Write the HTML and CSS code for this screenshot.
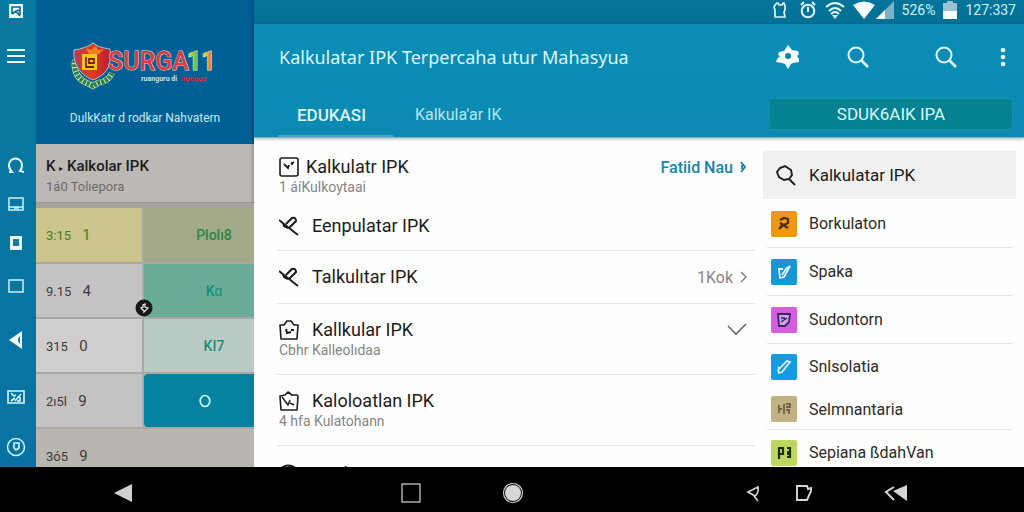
FILE: index.html
```html
<!DOCTYPE html>
<html lang="id">
<head>
<meta charset="utf-8">
<meta name="viewport" content="width=device-width, initial-scale=1">
<title>Kalkulatar IPK</title>
<link rel="stylesheet" href="styles.css">
</head>
<body>
<div class="screen">
  <div class="app">
    <nav class="rail" aria-label="Menu">
      <button class="rail-btn" aria-label="App"><svg width="16" height="16" viewBox="0 0 16 16"><rect x="1" y="1" width="14" height="14" fill="#eaf8fb"/><path d="M4 11V4h8v8M4 11l4-3 4 5M9 7l3 1" fill="none" stroke="#0b6a92" stroke-width="1.6"/></svg></button>
      <button class="rail-btn" aria-label="Buka menu"><svg width="20" height="16" viewBox="0 0 20 16"><path d="M1 2h18M1 8h18M1 14h18" stroke="#e4fbff" stroke-width="2"/></svg></button>
      <span class="rail-gap"></span>
      <button class="rail-btn" aria-label="Dukungan"><svg width="18" height="18" viewBox="0 0 18 18"><path d="M2 16h3c-2-2-3-4-3-7a6.500 6.500 0 0 1 13 0c0 3-1 5-2 6l4 1" fill="none" stroke="#e4fbff" stroke-width="2"/></svg></button>
      <button class="rail-btn" aria-label="Layar"><svg width="16" height="14" viewBox="0 0 16 14"><path d="M1 1h14v12H1zM1 10h14M6 11h5" fill="none" stroke="#c9f3fa" stroke-width="1.500"/></svg></button>
      <button class="rail-btn" aria-label="Catatan"><svg width="14" height="16" viewBox="0 0 14 16"><rect x="1" y="1" width="12" height="14" fill="#e4fbff"/><rect x="4" y="4" width="6" height="7" fill="#2a84a8"/><path d="M4 6h6M4 9h6" stroke="#0b5f88"/></svg></button>
      <button class="rail-btn" aria-label="Kotak"><svg width="16" height="14" viewBox="0 0 16 14"><rect x="1" y="1" width="14" height="12" fill="none" stroke="#c9f3fa" stroke-width="1.500"/></svg></button>
      <button class="rail-btn" aria-label="Kembali"><svg width="14" height="20" viewBox="0 0 14 20"><path d="M13 1v18L0 10z" fill="#eefcff"/><path d="M11 6v8q-4-4 0-8" fill="#0b709d"/></svg></button>
      <button class="rail-btn" aria-label="Gambar"><svg width="18" height="16" viewBox="0 0 18 16"><path d="M1 2h16v12H1zM4 4l3 3 2-1M8 12l6-7M4 12l4-3M13 8v4h-3" fill="none" stroke="#d5f6fc" stroke-width="1.600"/></svg></button>
      <button class="rail-btn" aria-label="Profil"><svg width="20" height="20" viewBox="0 0 20 20"><circle cx="10" cy="10" r="8.500" fill="none" stroke="#d5f6fc" stroke-width="1.500"/><path d="M8 6h5v5l-3 2-2-2z" fill="none" stroke="#d5f6fc" stroke-width="1.600"/></svg></button>
    </nav>

    <aside class="drawer">
      <header class="brand">
        <svg class="logo" width="144" height="48" viewBox="0 0 144 48" role="img" aria-label="SURGA11">
          <defs>
            <linearGradient id="ones" x1="0" x2="1"><stop offset="0" stop-color="#f2df3a"/><stop offset=".4" stop-color="#58b13c"/><stop offset=".6" stop-color="#e8d044"/><stop offset="1" stop-color="#dd3b33"/></linearGradient>
            <linearGradient id="shield" x1="0" x2="1"><stop offset="0" stop-color="#b83a57"/><stop offset=".5" stop-color="#e33a1e"/><stop offset="1" stop-color="#b51f38"/></linearGradient>
          </defs>
          <path d="M2 18c-2 12 4 20 12 23l6 3 5-3c7-1 12-5 14-10" fill="none" stroke="#cfeac3" stroke-width="6"/>
          <path d="M2 18c-2 12 4 20 12 23l6 3 5-3c7-1 12-5 14-10" fill="none" stroke="#2f7f4b" stroke-width="5" stroke-dasharray="3 1"/>
          <path d="M20 1c5 4 10 5 17 6 1 14 0 24-17 31C5 32 0 20 1 8c7-1 14-3 19-7z" fill="url(#shield)" stroke="#a6c9d6"/>
          <path d="M13 6l5 2 5-4 2 4 6-1-5 5H16z" fill="#f07d22"/>
          <path d="M9 12h15v16H9z" fill="#f7c51e"/>
          <path d="M13 15v10h8M16 17h5v4h-5z" fill="none" stroke="#7c2320" stroke-width="1.800"/>
          <text x="35" y="28" class="logo-name">SURGA</text>
          <text x="114" y="28" class="logo-num">11</text>
          <text x="68" y="39" class="logo-sub">ruanguru di</text>
          <text x="108" y="39" class="logo-tag">ngeaga</text>
        </svg>
        <p class="brand-text">DulkKatr d rodkar Nahvatern</p>
      </header>
      <div class="drawer-title">
        <h2>K <small>▸</small> Kalkolar IPK</h2>
        <p>1á0 Tolıepora</p>
      </div>
      <div class="scores-wrap">
        <table class="scores">
          <colgroup><col class="col-num"><col></colgroup>
          <tbody>
            <tr><td class="num yellow">3:15 <b>1</b></td><td class="tag olive">Plolı8</td></tr>
            <tr><td class="num">9.15 <b>4</b></td><td class="tag teal">Kɑ</td></tr>
            <tr><td class="num light">315 <b>0</b></td><td class="tag mint">KI7</td></tr>
            <tr><td class="num">2ı5l <b>9</b></td><td class="tag"><button class="pick" aria-label="Pilih"><svg width="12" height="14" viewBox="0 0 12 14"><ellipse cx="6" cy="7" rx="4.800" ry="5.500" fill="none" stroke="#c8f7fb" stroke-width="1.700"/></svg></button></td></tr>
            <tr><td class="num last" colspan="2">3ó5 <b>9</b></td></tr>
          </tbody>
        </table>
        <span class="pin"><svg width="18" height="18" viewBox="0 0 18 18"><circle cx="9" cy="9" r="8.500" fill="#171717"/><path d="M9 12L6 9l2-1V6l2-1v3l3 1-4 4z" fill="none" stroke="#e9e9e9" stroke-width="1.300"/></svg></span>
      </div>
    </aside>

    <main class="content">
      <div class="status">
        <svg class="status-first" width="16" height="18" viewBox="0 0 16 18"><path d="M3 4l2-2h1l1 2h3l1-2h1l1 3v4l-1 2 1 5H3V9L2 6z" fill="none" stroke="#d8f8fd" stroke-width="1.700"/></svg>
        <svg width="18" height="18" viewBox="0 0 18 18"><circle cx="9" cy="10" r="6.300" fill="none" stroke="#e2fbff" stroke-width="2"/><path d="M9 6v5M2 4l3-3M16 4l-3-3" stroke="#e2fbff" stroke-width="2"/></svg>
        <svg width="20" height="18" viewBox="0 0 20 18"><path d="M1 6q9-8 18 0M4 10q6-6 12 0M6 13q4-4 8 0" fill="none" stroke="#e2fbff" stroke-width="2"/><path d="M7 14h6l-3 4z" fill="#e2fbff"/></svg>
        <svg class="status-wide" width="22" height="18" viewBox="0 0 22 18"><path d="M0 4q11-7 22 0L11 18z" fill="#f4feff"/></svg>
        <svg width="18" height="18" viewBox="0 0 18 18"><path d="M18 0v18H0z" fill="#7bb2c8"/><path d="M9 9v9H0z" fill="#f4feff"/></svg>
        <span>526%</span>
        <svg width="14" height="18" viewBox="0 0 14 18"><path d="M4 0h6v2h4v16H0V2h4z" fill="#9bc3d3"/><path d="M0 10h14v8H0z" fill="#f4feff"/></svg>
        <time>127:337</time>
      </div>
      <header class="appbar">
        <div class="appbar-top">
          <h1>Kalkulatar IPK Terpercaha utur Mahasyua</h1>
          <div class="tools">
            <button aria-label="Setelan"><svg width="24" height="24" viewBox="0 0 24 24"><path d="M12 0l4 5 6 1 1 3-2 2 2 3v3l-6 1-2 1-3 5-3-5-3-1-6-1 1-3 3-3-2-1 1-3 5-1z" fill="#effdff"/><circle cx="12" cy="11" r="3" fill="#0b83ab"/></svg></button>
            <button aria-label="Cari"><svg width="24" height="24" viewBox="0 0 24 24"><circle cx="10" cy="10" r="7.500" fill="none" stroke="#dcf8fd" stroke-width="2"/><path d="M15 15l7 7" stroke="#dcf8fd" stroke-width="2.600"/></svg></button>
            <button class="tool-far" aria-label="Cari lagi"><svg width="24" height="24" viewBox="0 0 24 24"><circle cx="10" cy="10" r="7.500" fill="none" stroke="#dcf8fd" stroke-width="2"/><path d="M15 15l7 7" stroke="#dcf8fd" stroke-width="2.600"/></svg></button>
            <button class="tool-more" aria-label="Lainnya"><svg width="6" height="22" viewBox="0 0 6 22"><circle cx="3" cy="4" r="2.300" fill="#effdff"/><circle cx="3" cy="11" r="2.300" fill="#effdff"/><circle cx="3" cy="18" r="2.300" fill="#effdff"/></svg></button>
          </div>
        </div>
        <div class="appbar-tabs">
          <a class="tab tab-on" href="#edukasi">EDUKASI</a>
          <a class="tab" href="#kalkulatar">Kalkula'ar IK</a>
          <button class="cta">SDUK6AIK IPA</button>
        </div>
      </header>
      <div class="body">
        <ul class="list">
          <li class="row row-first">
            <svg width="20" height="20" viewBox="0 0 20 20"><rect x="1" y="1" width="18" height="18" rx="2" fill="none" stroke="#1c1c1c" stroke-width="1.600"/><path d="M5 7l4 4 1-3M13 5v3M12 7l3-2" fill="none" stroke="#1c1c1c" stroke-width="1.800"/></svg>
            <h3>Kalkulatr IPK</h3>
            <p>1 áíKulkoytaai</p>
            <a class="more" href="#semua">Fatiid Nau <svg width="7" height="12" viewBox="0 0 7 12"><path d="M1 1l4 5-4 5M2 4v4" fill="none" stroke="#1585a8" stroke-width="1.800"/></svg></a>
          </li>
          <li class="row row-short">
            <svg width="20" height="20" viewBox="0 0 20 20"><path d="M0 4l10 8M4 7l1 3 4 2M7 8l6-6q4-1 4 3l-7 7 9 7" fill="none" stroke="#1c1c1c" stroke-width="2"/></svg>
            <h3>Eenpulatar IPK</h3>
          </li>
          <li class="row row-mid">
            <svg width="20" height="20" viewBox="0 0 20 20"><path d="M0 4l10 8M4 7l1 3 4 2M7 8l6-6q4-1 4 3l-7 7 9 7" fill="none" stroke="#1c1c1c" stroke-width="2"/></svg>
            <h3>Talkulıtar IPK</h3>
            <a class="more more-grey" href="#kok">1Kok <svg width="7" height="12" viewBox="0 0 7 12"><path d="M1 1l5 5-5 5" fill="none" stroke="#777" stroke-width="1.300"/></svg></a>
          </li>
          <li class="row row-tall">
            <svg width="20" height="20" viewBox="0 0 20 20"><path d="M1 5h4l3-4h4l3 4h4l-1 14H2z" fill="none" stroke="#1c1c1c" stroke-width="1.600" stroke-linejoin="round"/><path d="M7 9l1 4 4-1M12 10h3" fill="none" stroke="#1c1c1c" stroke-width="2"/></svg>
            <h3>Kallkular IPK</h3>
            <p>Cbhr Kalleolıdaa</p>
            <svg class="tick" width="20" height="14" viewBox="0 0 20 14"><path d="M1 3l8 8L19 1" fill="none" stroke="#666" stroke-width="1.600"/></svg>
          </li>
          <li class="row row-tall">
            <svg width="20" height="20" viewBox="0 0 20 20"><path d="M1 5l5-1 3-3 4 3h5l1 1-1 14H2z" fill="none" stroke="#1c1c1c" stroke-width="1.600" stroke-linejoin="round"/><path d="M3 6l6 8 2-5M11 12l4 2" fill="none" stroke="#1c1c1c" stroke-width="1.500"/></svg>
            <h3>Kaloloatlan IPK</h3>
            <p>4 hfa Kulatohann</p>
          </li>
          <li class="row row-last">
            <svg width="20" height="20" viewBox="0 0 20 20"><path d="M1 5q8-7 17 0v14H2zM6 5l5-2 3 3" fill="none" stroke="#1c1c1c" stroke-width="1.800"/></svg>
            <h3>Analar IPK</h3>
          </li>
        </ul>
        <ul class="side">
          <li class="side-row side-on">
            <svg width="22" height="22" viewBox="0 0 22 22"><path d="M10 2l6 4 1 5-3 4-5 1-5-3-2-5 3-4zM14 15l6 6" fill="none" stroke="#1c1c1c" stroke-width="1.900"/></svg>
            <a href="#s1">Kalkulatar IPK</a>
          </li>
          <li class="side-row">
            <svg width="26" height="26" viewBox="0 0 26 26"><rect width="26" height="26" rx="2" fill="#ee9714"/><path d="M9 9l4-2 4 1v4l-8 4M9 12l8 5M8 18l5-5" fill="none" stroke="#4b2c0a" stroke-width="2.200"/></svg>
            <a href="#s2">Borkulaton</a>
          </li>
          <li class="side-row">
            <svg width="26" height="26" viewBox="0 0 26 26"><rect width="26" height="26" rx="2" fill="#1696d3"/><path d="M7 10h5M8 11l1 8 4-1 6-11-4 3-4 6" fill="none" stroke="#dff6ff" stroke-width="1.800"/></svg>
            <a href="#s3">Spaka</a>
          </li>
          <li class="side-row">
            <svg width="26" height="26" viewBox="0 0 26 26"><rect width="26" height="26" rx="2" fill="#d45fdc"/><path d="M7 7h12l-1 8-4 4H8z" fill="#cda6e6" stroke="#41206f" stroke-width="1.800"/><path d="M10 15l6-4M10 11h4" stroke="#41206f" stroke-width="1.500"/></svg>
            <a href="#s4">Sudontorn</a>
          </li>
          <li class="side-row side-open">
            <svg width="26" height="26" viewBox="0 0 26 26"><rect width="26" height="26" rx="2" fill="#159be0"/><path d="M7 13l2 1 7-7 3 1-8 10-3 1-1-3 7-7" fill="none" stroke="#dff6ff" stroke-width="1.700"/></svg>
            <a href="#s5">Snlsolatia</a>
          </li>
          <li class="side-row side-low">
            <svg width="26" height="26" viewBox="0 0 26 26"><rect width="26" height="26" rx="2" fill="#c2b183"/><path d="M8 9v8M8 13h3M13 8v10M15 8h4v3h-4M15 14h4M18 14v4" fill="none" stroke="#5d5238" stroke-width="1.500"/></svg>
            <a href="#s6">Selmnantaria</a>
          </li>
          <li class="side-row side-open">
            <svg width="26" height="26" viewBox="0 0 26 26"><rect width="26" height="26" rx="2" fill="#bcd65f"/><path d="M8 19V8h4v6H8M16 8h3v4h-3M16 14h3v3h-3" fill="none" stroke="#1f2b10" stroke-width="2.200"/></svg>
            <a href="#s7">Sepiana ßdahVan</a>
          </li>
        </ul>
      </div>
    </main>
  </div>

  <nav class="sysbar" aria-label="Navigasi sistem">
    <button aria-label="Kembali"><svg width="20" height="20" viewBox="0 0 20 20"><path d="M19 1v18L1 10z" fill="#cfcfcf"/></svg></button>
    <button aria-label="Terbaru"><svg width="20" height="20" viewBox="0 0 20 20"><rect x="1" y="1" width="18" height="18" fill="none" stroke="#d6d6d6" stroke-width="1.200"/></svg></button>
    <button aria-label="Beranda"><svg width="22" height="22" viewBox="0 0 22 22"><circle cx="11" cy="11" r="9.500" fill="none" stroke="#cfcfcf" stroke-width="1.200"/><circle cx="11" cy="11" r="8" fill="#d6d6d6"/></svg></button>
    <button aria-label="Cari"><svg width="16" height="18" viewBox="0 0 16 18"><path d="M13 3L3 8l7 4q4-3 3-9zM9 12l4 5" fill="none" stroke="#d6d6d6" stroke-width="1.700"/></svg></button>
    <button aria-label="Catatan"><svg width="18" height="18" viewBox="0 0 18 18"><path d="M2 2h10l1 3 3-1v3l-4 9H2z" fill="none" stroke="#d6d6d6" stroke-width="1.900"/></svg></button>
    <button aria-label="Mundur"><svg width="24" height="18" viewBox="0 0 24 18"><path d="M23 1v16L9 7z" fill="#d6d6d6"/><path d="M10 3L2 8l8 8" fill="none" stroke="#d6d6d6" stroke-width="2"/></svg></button>
  </nav>
</div>
</body>
</html>
```
FILE: styles.css
```css
* { box-sizing: border-box; }
body { margin: 0; font-family: Roboto, "Liberation Sans", sans-serif; color: #222; background: #fff; }
h1, h2, h3, p, ul { margin: 0; padding: 0; font-weight: 400; }
ul { list-style: none; }
a { color: inherit; text-decoration: none; }
button { border: 0; padding: 0; background: none; font: inherit; color: inherit; display: grid; place-items: center; }
svg { display: block; flex: none; }

.screen { display: flex; flex-direction: column; height: 100vh; overflow: hidden; }
.app { flex: 1; min-height: 0; display: flex; }

.rail { flex: none; width: 36px; padding-right: 4px; overflow: hidden; display: grid; justify-items: center; grid-template-rows: 22px 68px 56px 38px 39px 39px 48px 60px 54px 46px; background: linear-gradient(#0879a0, #0873a2); }

.drawer { flex: none; width: 218px; overflow: hidden; background: #bab5b0; display: flex; flex-direction: column; }
.brand { flex: none; height: 144px; background: #005f94; padding-top: 42px; display: flex; flex-direction: column; align-items: center; gap: 20px; }
.logo { overflow: visible; }
.logo-name { font: 500 25px Roboto, sans-serif; fill: #dc3a40; stroke: #f0cfd4; stroke-width: 1px; paint-order: stroke; }
.logo-num { font: 700 25px Roboto, sans-serif; fill: url(#ones); stroke: #e8efc0; stroke-width: 1px; paint-order: stroke; }
.logo-sub { font: 700 7px Roboto, sans-serif; fill: #c4e4f2; }
.logo-tag { font: italic 700 8px Roboto, sans-serif; fill: #d9283a; }
.brand-text { font-size: 12px; line-height: 16px; color: #c6ebf4; }
.drawer-title { flex: none; height: 59px; padding: 12px 10px; background: #bcb8b5; border-bottom: 1px solid #9d9a98; }
.drawer-title h2 { font-size: 15px; line-height: 20px; font-weight: 500; color: #1b1b1b; }
.drawer-title small { font-size: 8px; }
.drawer-title p { font-size: 13px; line-height: 16px; color: #6d6a68; }
.scores-wrap { position: relative; border-top: 5px solid #a5a3a1; }
.scores { width: 100%; border-collapse: collapse; table-layout: fixed; }
.col-num { width: 107px; }
.scores td { height: 55px; padding: 0; border-bottom: 2px solid #aaa8a6; }
.num { background: #c5c2c4; font-size: 13px; color: #3c3c3c; }
.scores .num { padding-left: 10px; }
.num b { font-weight: 400; font-size: 15px; padding-left: 8px; }
.scores .yellow { background: #cbc48d; color: #41801e; }
.scores .light { background: #cfcdce; }
.scores .last { background: #b9b5b0; }
.tag { font-size: 14px; font-weight: 500; text-align: center; }
.scores .tag { padding-left: 30px; border-left: 2px solid #aaa8a6; }
.olive { background: #a3aa89; color: #2a8747; }
.teal { background: #6aac98; color: #178f78; }
.mint { background: #b9cbc4; color: #178f78; }
.scores .tag:has(.pick) { padding: 0; }
.pick { width: 100%; height: 53px; padding-left: 12px; background: #0582a0; border-radius: 4px 0 0 4px; }
.pick svg { margin-right: 0; }
.pin { position: absolute; left: 99px; top: 91px; }

.content { flex: 1; min-width: 0; display: flex; flex-direction: column; background: #fefefe; box-shadow: 0 0 5px rgba(0, 0, 0, .4); }
.status { flex: none; height: 24px; padding: 0 8px 4px 0; display: flex; align-items: center; justify-content: flex-end; gap: 8px; background: linear-gradient(#04749b, #067094); color: #cdf2f9; font-size: 14px; }
.status-first { margin-right: 3px; }
.status-wide { margin-right: -7px; }
.appbar { flex: none; height: 114px; background: linear-gradient(#0b8db5, #0b89b2); border-bottom: 1px solid #7fb4c6; box-shadow: 0 1px 3px rgba(0, 0, 0, .3); color: #dcf8fd; }
.appbar-top { height: 66px; padding: 0 18px 0 25px; display: flex; align-items: center; justify-content: space-between; }
.appbar h1 { font: 400 18px/24px "Noto Sans", sans-serif; white-space: nowrap; }
.tools { display: flex; align-items: center; gap: 46px; }
.tool-far { margin-left: 18px; }
.tool-more { margin-left: -4px; }
.appbar-tabs { height: 47px; padding: 0 11px 0 24px; display: flex; align-items: center; }
.tab { height: 47px; line-height: 50px; padding: 0 10px; font-size: 16px; color: #b5e6f2; white-space: nowrap; }
.tab-on { padding: 0 27px 0 19px; margin-right: 12px; font-size: 17px; color: #dcf8fd; font-weight: 500; border-bottom: 2px solid #4aa9c4; }
.cta { margin-left: auto; flex: 0 1 244px; height: 32px; border: 1px solid #1394a8; border-radius: 3px; background: #058291; font-size: 17px; color: #dcf8fd; }

.body { flex: 1; min-height: 0; display: flex; gap: 8px; padding: 13px 8px 0 23px; overflow: hidden; }
.list { flex: 1; min-width: 0; }
.row { display: grid; grid-template-columns: 20px 1fr auto; column-gap: 13px; align-items: center; align-content: center; padding: 0 8px 0 2px; border-bottom: 1px solid #e4e4e4; }
.row h3 { font-size: 18px; line-height: 22px; color: #1c1c1c; }
.row p { grid-column: 1 / 3; grid-row: 2; font-size: 14px; line-height: 18px; color: #858585; }
.row-first { height: 50px; column-gap: 7px; border-bottom: 0; }
.row-short { height: 50px; }
.row-mid { height: 53px; }
.row-tall { height: 71px; }
.row-last { height: 55px; border-bottom: 0; }
.more { grid-column: 3; grid-row: 1; display: flex; align-items: center; gap: 7px; font-size: 16px; font-weight: 500; color: #1585a8; }
.more-grey { font-weight: 400; color: #858585; }
.tick { grid-column: 3; grid-row: 1; }

.side { flex: 0 0 253px; }
.side-row { display: flex; align-items: center; gap: 12px; height: 48px; margin: 0 4px; padding: 0 4px; border-bottom: 1px solid #e4e4e4; font-size: 16px; color: #2b2b2b; }
.side-on { margin: 0 0 1px; padding: 0 12px; border: 0; background: #f0f0f0; font-size: 17px; color: #1c1c1c; }
.side-open { height: 45px; border-bottom: 0; }
.side-low { height: 41px; }

.sysbar { flex: none; height: 45px; padding: 6px 0 0 11%; background: #000; display: grid; align-items: center; justify-items: start; grid-template-columns: 288fr 101fr 242fr 50fr 89fr 140fr; }
```
